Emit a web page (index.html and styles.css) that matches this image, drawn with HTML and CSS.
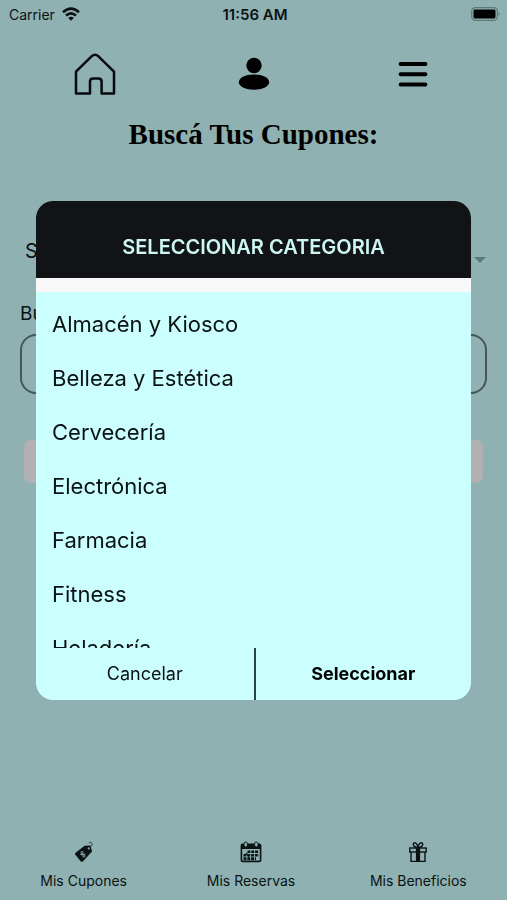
FILE: index.html
```html
<!DOCTYPE html>
<html lang="es">
<head>
<meta charset="utf-8">
<meta name="viewport" content="width=device-width, initial-scale=1">
<title>Cupones</title>
<link rel="stylesheet" href="styles.css">
</head>
<body>
<div class="app">
  <div class="status">
    <span class="carrier">Carrier
      <svg width="18" height="14" viewBox="0 0 18 14" aria-hidden="true"><g fill="none" stroke="#0b1012" stroke-width="2.6"><path d="M1 5.2Q9-1.8 17 5.2"/><path d="M4 8.6Q9 4.2 14 8.6"/></g><path d="M6.2 10.9Q9 8.6 11.8 10.9L9 13.8Z" fill="#0b1012"/></svg>
    </span>
    <strong class="time">11:56 AM</strong>
    <svg class="battery" width="30" height="14" viewBox="0 0 30 14" aria-hidden="true"><rect x=".7" y=".7" width="25.6" height="12.6" rx="3.6" fill="none" stroke="#5f7878" stroke-width="1.2"/><rect x="2.5" y="2.5" width="22" height="9" rx="1.4" fill="#000"/><path d="M27.6 4.6Q30 7 27.6 9.4Z" fill="#5f7878"/></svg>
  </div>

  <nav class="topnav" aria-label="Principal">
    <a href="#inicio" aria-label="Inicio"><svg width="42" height="42" viewBox="0 0 42 42"><path d="M2 18.6L17.8 3.2Q21 .2 24.200 3.200L40 18.600V40.600H27.600V28.600Q27.600 25.400 24.400 25.400H19.200Q16 25.400 16 28.600V40.600H2Z" fill="none" stroke="#060a0c" stroke-width="2.500" stroke-linejoin="round"/></svg></a>
    <a href="#perfil" aria-label="Perfil"><svg width="32" height="34" viewBox="0 0 32 34"><circle cx="16" cy="8.500" r="7.700" fill="#000"/><path d="M16 17.500C7 17.500.8 20.800.8 25.300S8 32.700 16 32.700 31.200 29.800 31.200 25.300 25 17.500 16 17.500Z" fill="#000"/></svg></a>
    <button type="button" aria-label="Menú"><svg width="30" height="28" viewBox="0 0 30 28"><path d="M2.600 4H27.400M2.600 14.200H27.400M2.600 24.600H27.400" stroke="#000" stroke-width="4" stroke-linecap="round"/></svg></button>
  </nav>

  <main class="search">
    <h1>Buscá Tus Cupones:</h1>
    <form>
      <div class="select-row">
        <select aria-label="Categoria"><option>Seleccionar Categoria</option></select>
        <svg width="12" height="6" viewBox="0 0 12 6" aria-hidden="true"><path d="M0 0H12L6 6Z" fill="#5d7979"/></svg>
      </div>
      <label for="buscar">Buscar</label>
      <input id="buscar" type="text">
      <button class="submit" type="submit">Buscar</button>
    </form>
  </main>

  <nav class="tabs" aria-label="Secciones">
    <a href="#cupones"><svg width="20" height="22" viewBox="0 0 20 22" aria-hidden="true"><path d="M1.600 11.800L10.600 4.800L16.600 4.600L18 10.600L9 20.200Q7.600 21.400 6.400 20L1.200 13.600Q.6 12.600 1.600 11.800Z" fill="#0b1214"/><circle cx="14.800" cy="7.400" r="1.100" fill="#8fb1b1"/><path d="M14.600 7Q18.800 5.600 18.200 2.600Q17.400.6 14.800 1.800" fill="none" stroke="#33484a" stroke-width="1"/><path d="M6.400 13.600L11.200 13.200" stroke="#8fb1b1" stroke-width="1"/><circle cx="8" cy="11.600" r="1.100" fill="none" stroke="#8fb1b1" stroke-width=".9"/><circle cx="9.800" cy="15" r="1.100" fill="none" stroke="#8fb1b1" stroke-width=".9"/></svg><span>Mis Cupones</span></a>
    <a href="#reservas"><svg width="22" height="22" viewBox="0 0 22 22" aria-hidden="true"><rect x="1.400" y="3.400" width="19.200" height="17" rx="1.200" fill="none" stroke="#0b1214" stroke-width="1.600"/><path d="M1 3.400H21V8H1Z" fill="#0b1214"/><rect x="4" y="1" width="3.400" height="5" rx="1.700" fill="#8fb1b1" stroke="#0b1214"/><rect x="14.600" y="1" width="3.400" height="5" rx="1.700" fill="#8fb1b1" stroke="#0b1214"/><path d="M7.500 10.800H19M3.500 14.200H19M3.500 17.600H16" stroke="#0b1214" stroke-width="2.600" stroke-dasharray="2.900 .9"/><path d="M6 12L9 15.500" stroke="#0b1214" stroke-width="1.200"/></svg><span>Mis Reservas</span></a>
    <a href="#beneficios"><svg width="20" height="22" viewBox="0 0 20 22" aria-hidden="true"><g fill="none" stroke="#0b1214" stroke-width="1.400"><rect x="1.800" y="7" width="16.400" height="4"/><path d="M3 11V20.400H17V11M8.600 7V20.400M11.400 7V20.400"/><path d="M10 6.600C7 6.600 4.600 4.600 5.400 2.600C6.600.4 9.600 2.400 10 6.600C10.400 2.400 13.400.4 14.600 2.600C15.400 4.600 13 6.600 10 6.600Z"/></g><path d="M10 7V20.400" stroke="#0b1214" stroke-width="2"/></svg><span>Mis Beneficios</span></a>
  </nav>
</div>

<div class="overlay">
  <section class="modal" role="dialog" aria-modal="true" aria-labelledby="titulo">
    <header><h2 id="titulo">SELECCIONAR CATEGORIA</h2></header>
    <ul class="options">
      <li><button type="button">Almacén y Kiosco</button></li>
      <li><button type="button">Belleza y Estética</button></li>
      <li><button type="button">Cervecería</button></li>
      <li><button type="button">Electrónica</button></li>
      <li><button type="button">Farmacia</button></li>
      <li><button type="button">Fitness</button></li>
      <li><button type="button">Heladería</button></li>
    </ul>
    <footer>
      <button type="button">Cancelar</button>
      <button type="button" class="confirm">Seleccionar</button>
    </footer>
  </section>
</div>
</body>
</html>
```
FILE: styles.css
```css
* { box-sizing: border-box; }

body {
  margin: 0;
  background: #8fb1b1;
  color: #0b1214;
  font-family: Inter, "Liberation Sans", sans-serif;
}

button, input, select {
  font: inherit;
  color: inherit;
  background: none;
  border: 0;
  padding: 0;
}

a { color: inherit; text-decoration: none; }
svg { display: block; }

.app {
  min-height: 100vh;
  display: flex;
  flex-direction: column;
}

.status {
  display: grid;
  grid-template-columns: 1fr auto 1fr;
  align-items: center;
  height: 28px;
  padding: 0 6px 0 9px;
  font-size: 14px;
}
.carrier { display: flex; align-items: center; gap: 7px; }
.time { font-size: 15px; font-weight: 600; }
.battery { justify-self: end; }

.topnav {
  display: grid;
  grid-template-columns: repeat(3, 1fr);
  place-items: center;
  height: 91px;
  padding: 0 15px 0 16px;
}

.search { flex: 1; padding: 0 20px; }

h1 {
  margin: 0;
  color: #000;
  font: bold 29px/30px "Liberation Serif", serif;
  text-align: center;
}

form { margin-top: 80px; display: flex; flex-direction: column; }

.select-row {
  display: flex;
  align-items: center;
  height: 44px;
  padding: 0 1px 0 5px;
}
select { flex: 1; appearance: none; font-size: 20px; }
.select-row svg { margin-top: 18px; }

label { margin-top: 29px; font-size: 19px; line-height: 24px; }

input {
  height: 60px;
  margin-top: 8px;
  padding: 0 16px;
  border: 2px solid #465557;
  border-radius: 16px;
  font-size: 19px;
}

.submit {
  height: 43px;
  margin: 46px 4px 0;
  border-radius: 7px;
  background: #b3b0b3;
  font-size: 19px;
}

.tabs {
  display: grid;
  grid-template-columns: repeat(3, 1fr);
  padding: 0 5px 11px 0;
}
.tabs a {
  display: flex;
  flex-direction: column;
  align-items: center;
  gap: 10px;
  font-size: 14px;
  line-height: 16px;
}

.overlay {
  position: fixed;
  inset: 0;
  display: flex;
  align-items: center;
  justify-content: center;
  padding: 0 36px;
}

.modal {
  width: 100%;
  overflow: hidden;
  border-radius: 17px;
  background: #cbfffd;
}

.modal header {
  height: 91px;
  padding-top: 34px;
  background: #121317;
  border-bottom: 14px solid #f8f8f8;
}

h2 {
  margin: 0;
  color: #cdf7f1;
  font-size: 20px;
  line-height: 24px;
  font-weight: 600;
  text-align: center;
}

.options {
  height: 356px;
  margin: 0;
  padding: 5px 0 0;
  overflow: hidden;
  list-style: none;
}
.options button {
  width: 100%;
  height: 54px;
  padding-left: 16px;
  font-size: 22px;
  text-align: left;
}
.options li { display: flex; }

.modal footer {
  display: grid;
  grid-template-columns: 1fr 1fr;
  height: 52px;
  font-size: 18px;
}
.modal .confirm {
  border-left: 2px solid #2c4348;
  color: #000;
  font-weight: 700;
}
```
